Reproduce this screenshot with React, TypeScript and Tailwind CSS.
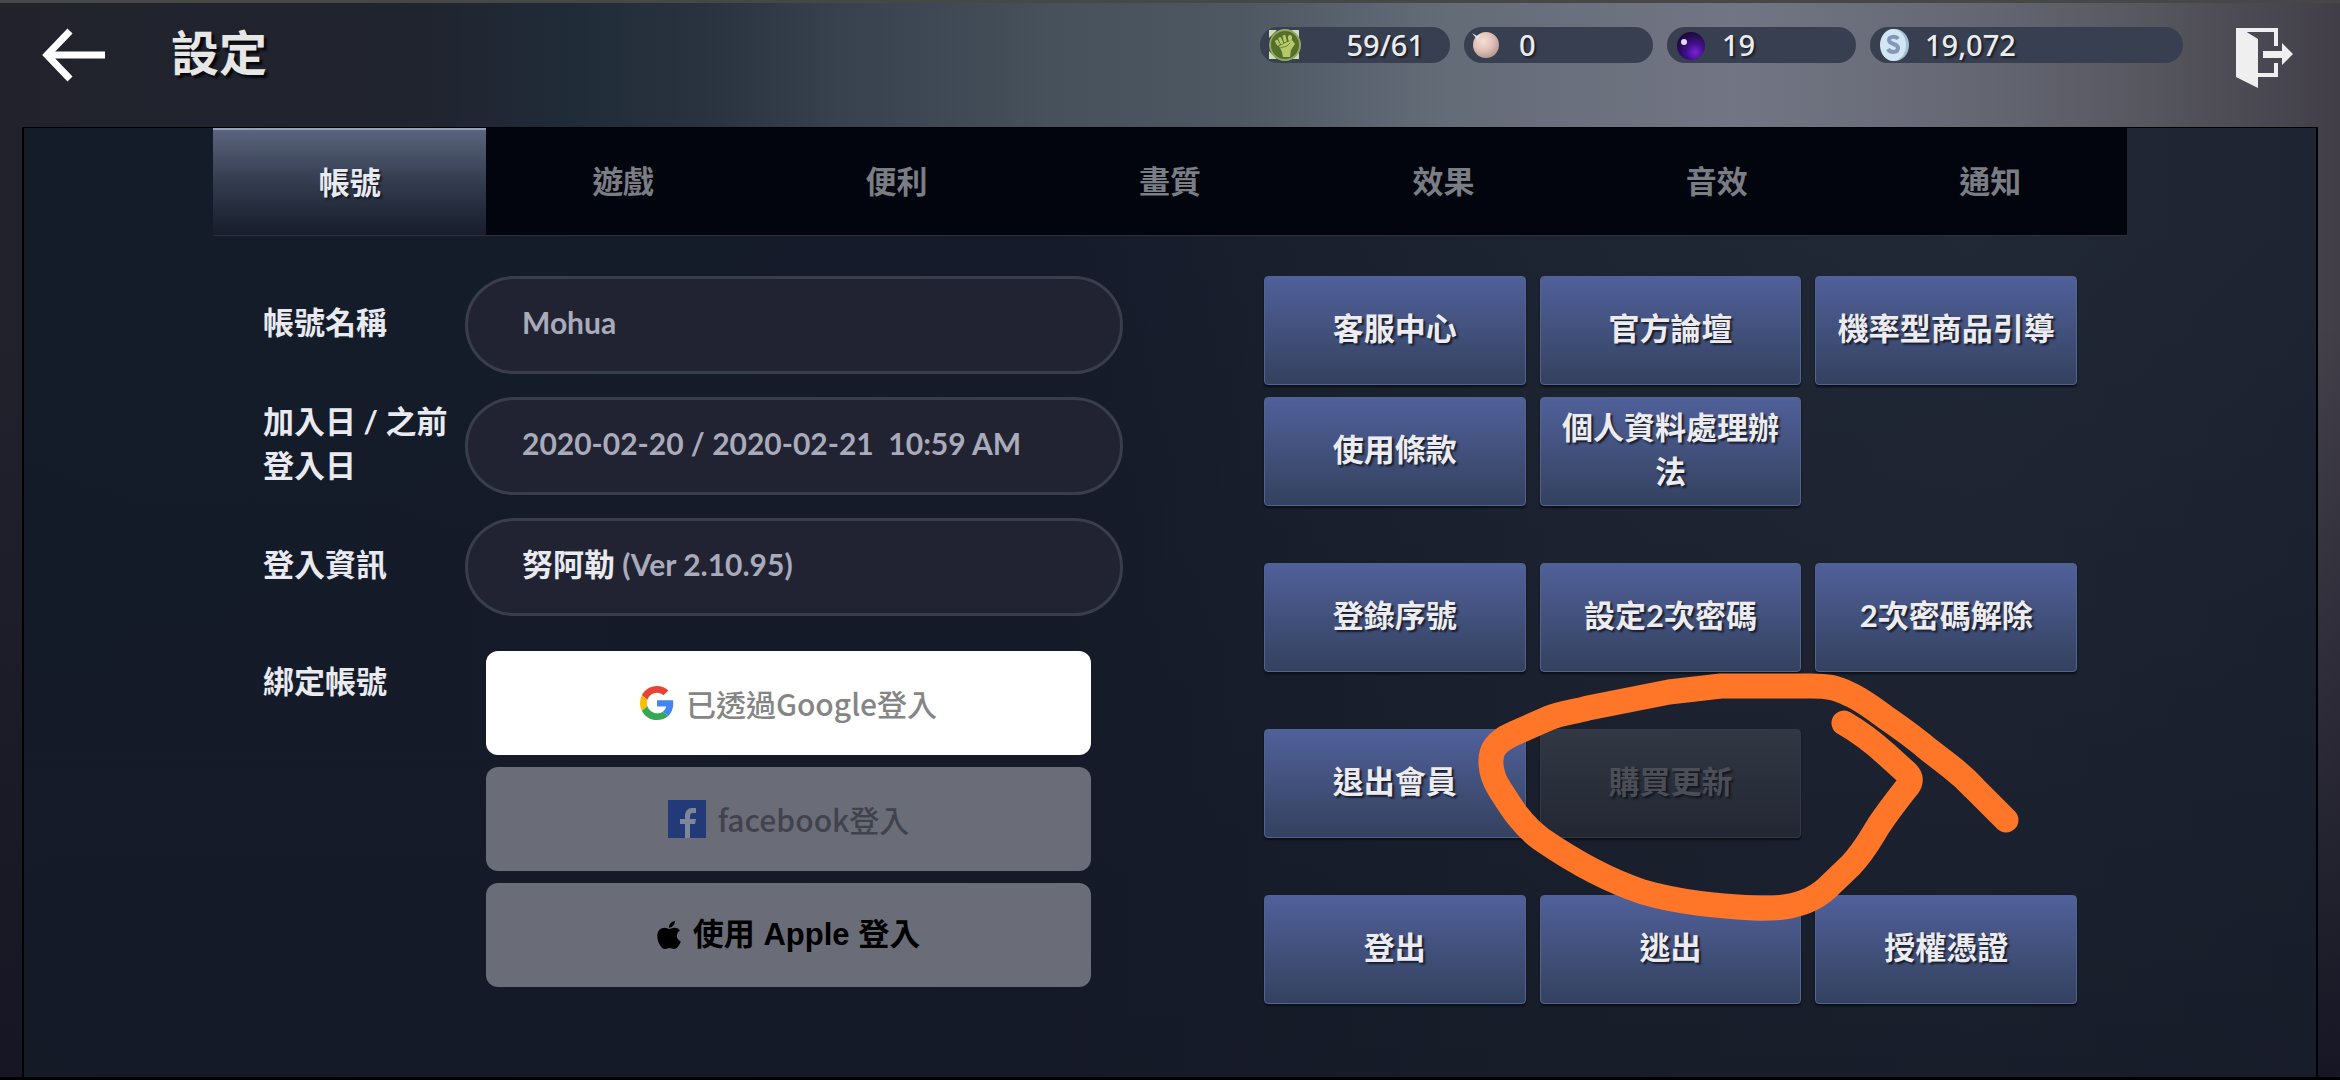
import { useState } from "react";
import type { ReactNode } from "react";
import clsx from "clsx";
import { FaApple } from "react-icons/fa";

const TABS = ["帳號", "遊戲", "便利", "畫質", "效果", "音效", "通知"];

type Action = { label: string; disabled?: boolean };

const ACTION_GROUPS: Action[][] = [
  [
    { label: "客服中心" },
    { label: "官方論壇" },
    { label: "機率型商品引導" },
    { label: "使用條款" },
    { label: "個人資料處理辦法" },
  ],
  [{ label: "登錄序號" }, { label: "設定2次密碼" }, { label: "2次密碼解除" }],
  [{ label: "退出會員" }, { label: "購買更新", disabled: true }],
  [{ label: "登出" }, { label: "逃出" }, { label: "授權憑證" }],
];

function BackIcon() {
  return (
    <svg viewBox="0 0 64 54" className="h-[54px] w-16" fill="none" stroke="#fff" strokeWidth="7">
      <path d="M4 27H63" />
      <path d="M28 3L5 27L28 51" />
    </svg>
  );
}

function ExitIcon() {
  return (
    <svg viewBox="0 0 58 62" className="h-[62px] w-[58px]" fill="#efefef">
      <path d="M1 1L10 4L23 12V61L1 50Z" />
      <path d="M1 1H43V19H39V5H8L1 3Z" />
      <path d="M23 46H39V36H43V50H23Z" />
      <path d="M28 24H47V16L58 27L47 38V31H28Z" />
    </svg>
  );
}

function FistIcon() {
  return (
    <svg viewBox="0 0 34 34" className="h-[34px] w-[34px]">
      <path d="M1 2L9 2L1 10ZM23 2H31V10ZM1 23V31H9ZM31 24V31H24Z" fill="#cfdcb4" />
      <circle cx="17" cy="17" r="15" fill="#566f2b" stroke="#93a766" strokeWidth="2" />
      <g fill="#b5c96a">
        <rect x="8" y="12" width="3" height="6" rx="1" transform="rotate(-30 9 15)" />
        <rect x="11" y="9" width="3" height="7" rx="1" transform="rotate(-24 13 12)" />
        <rect x="15" y="7" width="3" height="7" rx="1" transform="rotate(-14 17 10)" />
        <rect x="20" y="7" width="4" height="6" rx="2" />
        <path d="M11 18L17 15L24 12L27 16L23 22L22 29H15L14 24Z" />
      </g>
      <path d="M12 20L19 18L22 15" fill="none" stroke="#6f8838" />
    </svg>
  );
}

function PearlIcon() {
  return (
    <svg viewBox="0 0 34 34" className="h-[34px] w-[34px]">
      <defs>
        <radialGradient id="pearl" cx="0.4" cy="0.35" r="0.65">
          <stop offset="0" stopColor="#f6ded6" />
          <stop offset="0.6" stopColor="#dfbfb5" />
          <stop offset="1" stopColor="#b59c96" />
        </radialGradient>
      </defs>
      <circle cx="14" cy="17" r="13" fill="url(#pearl)" />
      <path d="M0 5L5 8L9 6L7 10L6 14L4 10Z" fill="#dfe3e8" />
    </svg>
  );
}

function OrbIcon() {
  return (
    <svg viewBox="0 0 34 34" className="h-[34px] w-[34px]">
      <defs>
        <radialGradient id="orb" cx="0.65" cy="0.72" r="0.7">
          <stop offset="0" stopColor="#7c22d8" />
          <stop offset="0.45" stopColor="#42108c" />
          <stop offset="1" stopColor="#1d0a3c" />
        </radialGradient>
      </defs>
      <circle cx="16" cy="18" r="14" fill="url(#orb)" />
      <circle cx="9" cy="14" r="3" fill="#e6d9fb" />
    </svg>
  );
}

function SilverIcon() {
  return (
    <svg viewBox="0 0 34 36" className="h-9 w-[34px]">
      <ellipse cx="17" cy="18" rx="14" ry="16" fill="#a3bfd6" />
      <ellipse cx="15" cy="18" rx="13" ry="16" fill="#d3e6f3" />
      <path
        d="M20 12C18 9 11 9 11 13C11 18 20 16 20 21C20 26 12 26 10 22"
        fill="none"
        stroke="#8398b8"
        strokeWidth="4"
      />
    </svg>
  );
}

function GoogleIcon() {
  return (
    <svg viewBox="0 0 48 48" className="h-[34px] w-[34px]">
      <path fill="#EA4335" d="M24 9.5c3.54 0 6.71 1.22 9.21 3.6l6.85-6.85C35.9 2.38 30.47 0 24 0 14.62 0 6.51 5.38 2.56 13.22l7.98 6.19C12.43 13.72 17.74 9.5 24 9.5z" />
      <path fill="#4285F4" d="M46.98 24.55c0-1.57-.15-3.09-.38-4.55H24v9.02h12.94c-.58 2.96-2.26 5.48-4.78 7.18l7.73 6c4.51-4.18 7.09-10.36 7.09-17.65z" />
      <path fill="#FBBC05" d="M10.53 28.59A14.5 14.5 0 0 1 9.77 24c0-1.6.27-3.14.76-4.59l-7.98-6.19A23.9 23.9 0 0 0 0 24c0 3.88.92 7.54 2.56 10.78l7.97-6.19z" />
      <path fill="#34A853" d="M24 48c6.48 0 11.93-2.13 15.89-5.81l-7.73-6c-2.15 1.45-4.92 2.3-8.16 2.3-6.26 0-11.57-4.22-13.47-9.91l-7.98 6.19C6.51 42.62 14.62 48 24 48z" />
    </svg>
  );
}

function FacebookIcon() {
  return (
    <svg viewBox="0 0 38 38" className="h-[38px] w-[38px]">
      <rect width="38" height="38" fill="#223a78" />
      <path
        d="M17 38V24H12V19H17V16C17 11 20 8 24 8H28V13H25C23 13 22 14 22 16V19H28L27 24H22V38Z"
        fill="#80869a"
      />
    </svg>
  );
}

function Currency({ icon, value, className }: { icon: ReactNode; value: string; className: string }) {
  return (
    <div className={clsx("flex h-9 items-center rounded-full bg-[#373f50] pl-2", className)}>
      {icon}
      <span className="text-[29px] leading-9 font-medium text-[#ececec] [text-shadow:2px_2px_2px_#1b1f28]">
        {value}
      </span>
    </div>
  );
}

function Field({ id, label, children }: { id: string; label: string; children: ReactNode }) {
  return (
    <div className="flex items-center">
      <label htmlFor={id} className="w-[202px] pr-4 pb-1.5 leading-11 font-bold">
        {label}
      </label>
      <output
        id={id}
        className="flex h-[98px] flex-1 items-center rounded-full border-3 border-[#393d4c] bg-[#212333] px-[54px] pb-1.5 text-[30px] font-bold whitespace-pre text-[#a9abbb]"
      >
        {children}
      </output>
    </div>
  );
}

function ActionButton({ label, disabled }: Action) {
  return (
    <button
      type="button"
      disabled={disabled}
      className={clsx(
        "flex h-[109px] items-center justify-center rounded-sm border px-5 pb-1.5 leading-11 font-bold shadow-[0_2px_2px_#0b0f18]",
        disabled
          ? "border-[#343945] bg-linear-to-b from-[#323744] to-[#222733] text-[#4b4e57] [text-shadow:2px_2px_2px_#14171f]"
          : "border-[#53638f] bg-linear-to-b from-[#50609a] via-[#42517c] to-[#34415f] text-[#ececf0] [text-shadow:2px_2px_2px_#161b2a]"
      )}
    >
      {label}
    </button>
  );
}

// hand-drawn marker loop round the purchase refresh button
function MarkerLoop() {
  return (
    <svg
      viewBox="0 0 560 264"
      className="pointer-events-none absolute top-[388px] left-[205px] h-[264px] w-[560px]"
      fill="none"
      stroke="#ff7628"
      strokeWidth="25"
      strokeLinecap="round"
      strokeLinejoin="round"
    >
      <path d="M375 59Q396 71 417 90L438 109Q444 115 439 122C428 136 420 146 410 161C400 177 396 186 382 201L358 224C342 239 317 246 284 244C250 242 212 239 174 228C135 215 101 195 72 175C52 160 42 143 30 124C20 108 20 91 26 83C31 76 37 73 46 69L80 54C92 49 105 48 119 44L200 28L252 22H342C358 22 366 23 380 30C392 35 404 44 416 53C432 64 446 74 460 86L482 103Q495 113 505 124L537 156" />
    </svg>
  );
}

export default function App() {
  const [tab, setTab] = useState("帳號");

  return (
    <div className="flex min-h-screen flex-col border-t-3 border-b-3 border-t-[#474846] border-b-black bg-[linear-gradient(180deg,#0e182800_30%,#161624_100%),linear-gradient(90deg,#21222c_0%,#20242f_18%,#202b38_24%,#28333f_30%,#38424e_36%,#47515c_45%,#4d5863_53%,#646c78_62%,#727583_74%,#676a76_83%,#56565f_92%,#413e48_100%)] px-[22px] font-['Lato','Noto_Sans_CJK_TC',sans-serif] text-[31px] text-[#e9eaef]">
      <header className="flex h-[124px] items-start justify-between">
        <div className="flex items-center pt-[18px] pl-5">
          <button type="button" aria-label="返回">
            <BackIcon />
          </button>
          <h1 className="pb-1 pl-[65px] text-5xl leading-16 font-bold text-[#e6e6e6] [text-shadow:3px_3px_2px_#08090d]">
            設定
          </h1>
        </div>
        <div className="flex items-start pt-6 pr-[25px] font-['Noto_Sans',sans-serif]">
          <div className="flex gap-[14px]">
            <Currency icon={<FistIcon />} value="59/61" className="w-[190px] justify-between pr-[26px]" />
            <Currency icon={<PearlIcon />} value="0" className="w-[189px] gap-[13px]" />
            <Currency icon={<OrbIcon />} value="19" className="w-[189px] gap-[13px]" />
            <Currency icon={<SilverIcon />} value="19,072" className="w-[313px] gap-[13px]" />
          </div>
          <button type="button" aria-label="離開" className="pl-[52px]">
            <ExitIcon />
          </button>
        </div>
      </header>

      <main className="flex-1 border-x-2 border-t border-black bg-[linear-gradient(180deg,#15192600_10%,#151926b0_100%),linear-gradient(90deg,#141c29_0%,#151b2a_45%,#1f2633_70%,#212836_85%,#1e2432_100%)] px-[189px]">
        <nav className="grid h-[108px] grid-cols-7 border-b border-[#2b303c] bg-[#02050d]">
          {TABS.map((t) => (
            <button
              key={t}
              type="button"
              onClick={() => setTab(t)}
              className={clsx(
                "font-bold",
                t === tab
                  ? "border-t-2 border-[#98a0b6] bg-linear-to-b from-[#5a647d] via-[#333c4e] to-[#171d2b] [text-shadow:2px_2px_2px_#141925]"
                  : "text-[#7b7d85]"
              )}
            >
              {t}
            </button>
          ))}
        </nav>

        <div className="flex justify-between px-[50px] pt-10">
          <section className="flex w-[860px] flex-col gap-[23px]">
            <Field id="account-name" label="帳號名稱">
              Mohua
            </Field>
            <Field id="join-date" label="加入日 / 之前登入日">
              2020-02-20 / 2020-02-21{"  "}10:59 AM
            </Field>
            <Field id="login-info" label="登入資訊">
              <span className="text-[31px] text-[#e9eaef]">努阿勒</span> (Ver 2.10.95)
            </Field>
            <div className="flex pt-3">
              <h2 className="w-[223px] pt-2 leading-11 font-bold">綁定帳號</h2>
              <div className="flex flex-1 flex-col gap-3 pr-8 font-['Noto_Sans_CJK_TC',sans-serif] text-[30px] font-medium">
                <button
                  type="button"
                  className="flex h-26 items-center justify-center gap-3 rounded-xl bg-white text-[#858585]"
                >
                  <GoogleIcon />
                  已透過Google登入
                </button>
                <button
                  type="button"
                  className="flex h-26 items-center justify-center gap-3 rounded-xl bg-[#6a6c78] text-[#40434d]"
                >
                  <FacebookIcon />
                  facebook登入
                </button>
                <button
                  type="button"
                  className="flex h-26 items-center justify-center gap-3 rounded-xl bg-[#6a6c78] font-['Liberation_Sans','Noto_Sans_CJK_TC',sans-serif] text-[31px] font-bold text-black"
                >
                  <FaApple className="h-8 w-6" />
                  使用 Apple 登入
                </button>
              </div>
            </div>
          </section>

          <section className="relative flex w-[813px] flex-col gap-[57px]">
            {ACTION_GROUPS.map((group) => (
              <div key={group[0].label} className="grid grid-cols-3 gap-x-[14px] gap-y-3">
                {group.map((a) => (
                  <ActionButton key={a.label} {...a} />
                ))}
              </div>
            ))}
            <MarkerLoop />
          </section>
        </div>
      </main>
    </div>
  );
}
